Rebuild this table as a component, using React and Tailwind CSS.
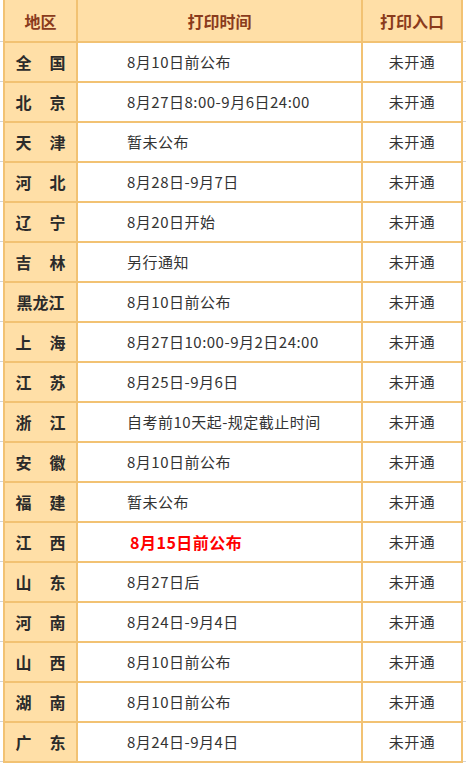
import React from "react";

const rows = [
  ["全", "国", "8月10日前公布"],
  ["北", "京", "8月27日8:00-9月6日24:00"],
  ["天", "津", "暂未公布"],
  ["河", "北", "8月28日-9月7日"],
  ["辽", "宁", "8月20日开始"],
  ["吉", "林", "另行通知"],
  ["黑龙江", null, "8月10日前公布"],
  ["上", "海", "8月27日10:00-9月2日24:00"],
  ["江", "苏", "8月25日-9月6日"],
  ["浙", "江", "自考前10天起-规定截止时间"],
  ["安", "徽", "8月10日前公布"],
  ["福", "建", "暂未公布"],
  ["江", "西", "8月15日前公布", true],
  ["山", "东", "8月27日后"],
  ["河", "南", "8月24日-9月4日"],
  ["山", "西", "8月10日前公布"],
  ["湖", "南", "8月10日前公布"],
  ["广", "东", "8月24日-9月4日"],
];

function Side() {
  return (
    <div className="w-[3px] shrink-0 flex flex-col justify-end">
      <div className="h-px bg-[#d4d4d4] mb-[1px]" />
    </div>
  );
}

export default function App() {
  return (
    <div
      className="w-[466px] bg-white"
      style={{ fontFamily: '"Noto Sans CJK SC", "Noto Sans", sans-serif' }}
    >
      <div className="flex h-[43px]">
        <Side />
        <div className="flex w-[461px] border-l-2 border-r-2 border-b-2 border-[#f2c273] bg-[#ffdfa7] text-[#8a3b1c] font-bold text-[16px]">
          <div className="w-[73px] border-r-2 border-[#f2c273] flex items-center justify-center">地区</div>
          <div className="w-[285px] border-r-2 border-[#f2c273] flex items-center justify-center">打印时间</div>
          <div className="flex-1 flex items-center justify-center">打印入口</div>
        </div>
        <Side />
      </div>
      {rows.map(([a, b, t, red], i) => (
        <div key={i} className="flex h-[40px]">
          <Side />
          <div className="flex w-[461px] border-l-2 border-r-2 border-b-2 border-[#f2c273] text-[#333333] text-[15px] tracking-[0.5px]">
            <div className="w-[73px] border-r-2 border-[#f2c273] bg-[#ffdfa7] flex items-center justify-center font-bold text-[16px] tracking-normal text-[#2b2b2b]">
              {b ? (
                <div className="flex w-[50px] justify-between">
                  <span>{a}</span>
                  <span>{b}</span>
                </div>
              ) : (
                <span>{a}</span>
              )}
            </div>
            <div className="w-[285px] border-r-2 border-[#f2c273] flex items-center">
              {red ? (
                <span className="pl-[52px] text-[#ff0000] font-bold text-[16px]">{t}</span>
              ) : (
                <span className="pl-[49px]">{t}</span>
              )}
            </div>
            <div className="flex-1 flex items-center justify-center">未开通</div>
          </div>
          <Side />
        </div>
      ))}
    </div>
  );
}
